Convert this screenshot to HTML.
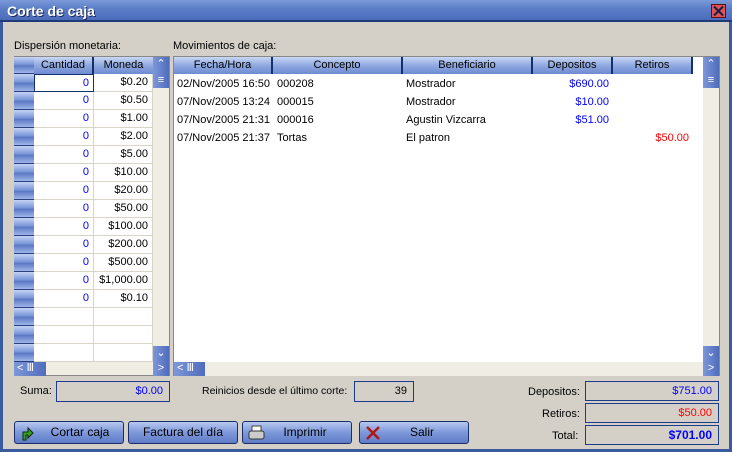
<!DOCTYPE html>
<html><head><meta charset="utf-8"><style>
*{margin:0;padding:0;box-sizing:border-box}
body{width:732px;height:452px;background:#d4d0c8;font-family:"Liberation Sans",sans-serif;font-size:11px;position:relative;overflow:hidden}
.a{position:absolute}
.win{left:0;top:0;width:732px;height:452px;border:3px solid #3a5a9e;border-top:none}
.title{left:0;top:0;width:732px;height:22px;background:linear-gradient(#7c9ad8,#5d7fc8 40%,#4a6cbc);border-bottom:2px solid #1e3a78;color:#fff;font-weight:bold;font-size:14px;padding:3px 0 0 7px;text-shadow:1px 1px 0 #1a2a5a}
.close{left:711px;top:4px;width:15px;height:14px;background:#e85050;border:1px solid #5a1010}
.hdr{background:linear-gradient(#c9d7f5,#8fa8e0 50%,#6e8bd2);border-right:2px solid #12306a;text-align:center;height:17px;line-height:16px;top:57px}
.sel{background:linear-gradient(#c5d4f5,#7b97d8 45%,#5c79c4 55%,#9fb6e8);border-bottom:1px solid #2a3f80}
.sb{background:linear-gradient(90deg,#7d97d8,#4f6cbd);color:#fff;text-align:center;font-size:11px}
.cell{height:18px;border-right:1px solid #d8d4c8;border-bottom:1px solid #d8d4c8;text-align:right;padding-right:4px;line-height:17px;background:#fff}
.box{border:1px solid #1e3c8c;background:#d4d0c8;text-align:right;padding-right:6px;line-height:18px}
.btn{top:421px;height:23px;border:1px solid #1a2f6a;border-radius:3px;background:linear-gradient(#b8c8f0,#7d98da 50%,#5f7bc6);text-align:center;line-height:21px;font-size:12px}
.blue{color:#0000ff}.red{color:#ff0000}
</style></head><body>
<div class="a win"></div>
<div class="a title">Corte de caja</div>
<div class="a close"><svg width="13" height="12"><path d="M2 1.5L11 10.5M11 1.5L2 10.5" stroke="#10204a" stroke-width="2"/></svg></div>
<div class="a" style="left:14px;top:40px">Dispersión monetaria:</div>
<div class="a" style="left:173px;top:40px">Movimientos de caja:</div>
<!-- left grid -->
<div class="a" style="left:14px;top:56px;width:156px;height:320px;background:#f0ede4;border:1px solid #888"></div>
<div class="a sel" style="left:14px;top:57px;width:20px;height:17px"></div>
<div class="a hdr" style="left:34px;width:60px">Cantidad</div>
<div class="a hdr" style="left:94px;width:59px;border-right:none">Moneda</div>
<div id="lg"></div>
<div class="a sb" style="left:153px;top:57px;width:16px;height:17px">⌃</div>
<div class="a sb" style="left:153px;top:74px;width:16px;height:14px;line-height:12px">≡</div>
<div class="a sb" style="left:153px;top:346px;width:16px;height:16px">⌄</div>
<div class="a sb" style="left:14px;top:362px;width:32px;height:14px;line-height:13px;text-align:left;padding-left:3px">&lt; Ⅲ</div>
<div class="a sb" style="left:153px;top:362px;width:16px;height:14px;line-height:13px">&gt;</div>
<!-- right grid -->
<div class="a" style="left:173px;top:56px;width:547px;height:320px;background:#fff;border:1px solid #888"></div>
<div class="a hdr" style="left:174px;width:99px">Fecha/Hora</div>
<div class="a hdr" style="left:273px;width:130px">Concepto</div>
<div class="a hdr" style="left:403px;width:130px">Beneficiario</div>
<div class="a hdr" style="left:533px;width:80px">Depositos</div>
<div class="a hdr" style="left:613px;width:80px">Retiros</div>
<div class="a" style="left:703px;top:57px;width:16px;height:305px;background:#f0ede4"></div>
<div class="a sb" style="left:703px;top:57px;width:16px;height:17px">⌃</div>
<div class="a sb" style="left:703px;top:74px;width:16px;height:14px;line-height:12px">≡</div>
<div class="a sb" style="left:703px;top:346px;width:16px;height:16px">⌄</div>
<div class="a" style="left:174px;top:362px;width:545px;height:14px;background:#f0ede4"></div>
<div class="a sb" style="left:174px;top:362px;width:31px;height:14px;line-height:13px;text-align:left;padding-left:3px">&lt; Ⅲ</div>
<div class="a sb" style="left:703px;top:362px;width:16px;height:14px;line-height:13px">&gt;</div>
<div id="rg"></div>
<!-- bottom -->
<div class="a" style="left:20px;top:385px">Suma:</div>
<div class="a box blue" style="left:56px;top:381px;width:114px;height:21px">$0.00</div>
<div class="a" style="left:202px;top:385px;font-size:10.5px">Reinicios desde el último corte:</div>
<div class="a box" style="left:354px;top:381px;width:60px;height:21px">39</div>
<div class="a" style="left:528px;top:386px">Depositos:</div>
<div class="a box blue" style="left:585px;top:381px;width:134px;height:20px">$751.00</div>
<div class="a" style="left:542px;top:408px">Retiros:</div>
<div class="a box red" style="left:585px;top:403px;width:134px;height:20px">$50.00</div>
<div class="a" style="left:552px;top:430px">Total:</div>
<div class="a box blue" style="left:585px;top:425px;width:134px;height:20px;font-weight:bold;font-size:12px">$701.00</div>
<div class="a btn" style="left:14px;width:110px;padding-left:22px">Cortar caja<svg class="a" style="left:5px;top:3px" width="14" height="16"><path d="M3 15L3 7L8 7L8 3L13 8L8 13L8 10L6 10L6 15Z" fill="#3aa020" stroke="#0b2a08"/></svg></div>
<div class="a btn" style="left:128px;width:110px">Factura del día</div>
<div class="a btn" style="left:242px;width:110px;padding-left:16px">Imprimir<svg class="a" style="left:5px;top:3px" width="18" height="16"><rect x="4" y="1" width="9" height="6" fill="#fff" stroke="#444"/><rect x="1" y="6" width="15" height="8" rx="2" fill="#ccc" stroke="#333"/></svg></div>
<div class="a btn" style="left:359px;width:110px;padding-left:16px">Salir<svg class="a" style="left:5px;top:3px" width="16" height="16"><path d="M2 2L14 14M14 2L2 14" stroke="#b01818" stroke-width="2.5"/></svg></div>
<script>
var m=["$0.20","$0.50","$1.00","$2.00","$5.00","$10.00","$20.00","$50.00","$100.00","$200.00","$500.00","$1,000.00","$0.10","","",""],h="";
for(var i=0;i<16;i++){var y=74+i*18;h+='<div class="a sel" style="left:14px;top:'+y+'px;width:20px;height:18px"></div>';
h+='<div class="a cell blue" style="left:34px;top:'+y+'px;width:60px'+(i==0?';border:1px solid #12306a':'')+'">'+(m[i]?'0':'')+'</div>';
h+='<div class="a cell" style="left:94px;top:'+y+'px;width:59px">'+m[i]+'</div>';}
document.getElementById('lg').innerHTML=h;
var r=[["02/Nov/2005 16:50","000208","Mostrador","$690.00",""],["07/Nov/2005 13:24","000015","Mostrador","$10.00",""],["07/Nov/2005 21:31","000016","Agustin Vizcarra","$51.00",""],["07/Nov/2005 21:37","Tortas","El patron","","$50.00"]];h="";
for(i=0;i<4;i++){var y=78+i*18;h+='<div class="a" style="left:177px;top:'+y+'px">'+r[i][0]+'</div><div class="a" style="left:277px;top:'+y+'px">'+r[i][1]+'</div><div class="a" style="left:406px;top:'+y+'px">'+r[i][2]+'</div><div class="a blue" style="left:533px;width:76px;text-align:right;top:'+y+'px">'+r[i][3]+'</div><div class="a red" style="left:613px;width:76px;text-align:right;top:'+y+'px">'+r[i][4]+'</div>';}
document.getElementById('rg').innerHTML=h;
</script>
</body></html>
